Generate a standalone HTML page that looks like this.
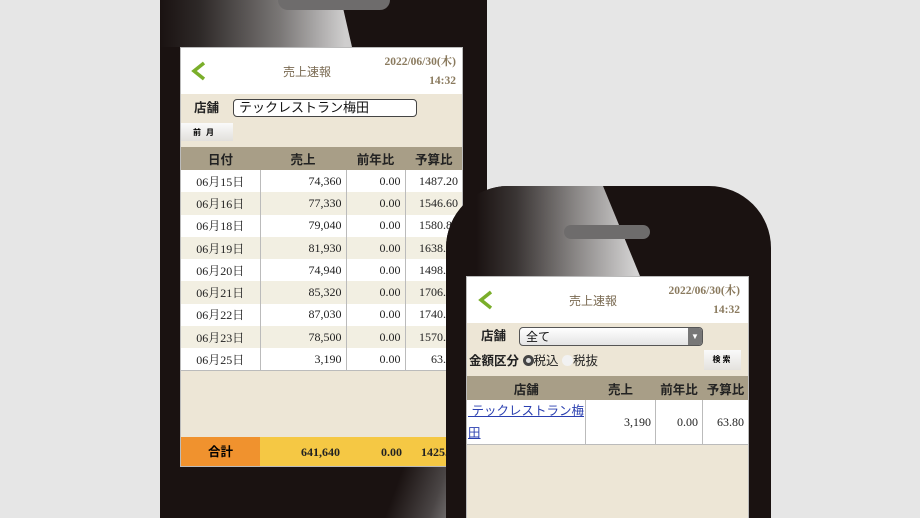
<!DOCTYPE html>
<html style="width:920px;height:518px;overflow:hidden"><head><meta charset="utf-8"><style>
*{margin:0;padding:0;box-sizing:border-box}
body{width:920px;height:518px;overflow:hidden;background:#e6e6e6;position:relative;font-family:"Liberation Serif","Noto Serif CJK SC",serif}
.ph{position:absolute;background:#1a1211;overflow:hidden}
.gl{position:absolute}
.scr{position:absolute;background:#ede6d6;overflow:hidden}
.hd{position:absolute;left:0;right:0;top:0;background:#fff}
.sans{font-family:"Liberation Sans","Noto Sans CJK JP",sans-serif}
.ab{position:absolute}
table{border-collapse:collapse;position:absolute;left:0}
td{font-size:12px;color:#222;border-right:1px solid #bbb;padding:0 4px;text-align:right}
th{font-family:"Liberation Sans","Noto Sans CJK JP",sans-serif;font-size:12.5px;color:#222;background:#a89e87;font-weight:bold;text-align:center}
.bk{font-weight:bold;font-size:12px;color:#222}
</style></head><body>

<!-- phone 1 -->
<div class="ph" style="left:160px;top:-40px;width:327px;height:558px;border-radius:40px 40px 0 0">
  <div class="gl" style="left:0;top:0;width:327px;height:87px;background:linear-gradient(90deg,#1a1211 0px,#2e2928 40px,#7a7776 120px,#cfcece 185px);clip-path:polygon(0 0,172px 0,192px 87px,0 87px)"></div>
  <div class="gl" style="left:118px;top:30px;width:112px;height:20px;border-radius:10px;background:#6e6c6c"></div>
  <div class="gl" style="left:200px;top:505px;width:127px;height:53px;background:linear-gradient(110deg,#1a1211 30%,#4a4545 60%,#bdbcbc 100%)"></div>
</div>
<div class="scr" style="left:180px;top:47px;width:283px;height:420px;border:1px solid #bbb">
  <div class="hd" style="height:46px">
    <svg class="ab" style="left:8px;top:12px" width="18" height="22"><path d="M15 3 L5 11 L15 19" stroke="#7aae2a" stroke-width="3.5" fill="none"/></svg>
    <div class="ab sans" style="left:102px;top:15px;font-size:12px;color:#7a6a52">売上速報</div>
    <div class="ab bk" style="right:6px;top:5px;color:#8a7a5e;font-size:11.5px">2022/06/30(木)</div>
    <div class="ab bk" style="right:6px;top:27px;color:#8a7a5e;font-size:11.5px">14:32</div>
  </div>
  <div class="ab sans" style="left:13px;top:49px;font-size:12.5px;font-weight:bold;color:#222">店舗</div>
  <div class="ab sans" style="left:52px;top:51px;width:184px;height:18px;border:1px solid #444;border-radius:4px;background:#fff;font-size:13px;padding-left:5px;line-height:16px;color:#111">テックレストラン梅田</div>
  <div class="ab sans" style="left:0;top:75px;width:52px;height:18px;background:linear-gradient(#fafafa,#e2e0dc);font-size:8px;font-weight:bold;padding:4px 0 0 12px;letter-spacing:5px">前月</div>
  <table style="top:99px;width:282px">
    <tr style="height:23px"><th style="width:79px">日付</th><th style="width:86px">売上</th><th style="width:59px">前年比</th><th>予算比</th></tr>
    <tr style="height:22.3px;background:#fff"><td style="text-align:center">06月15日</td><td>74,360</td><td>0.00</td><td>1487.20</td></tr>
    <tr style="height:22.3px;background:#f2efe2"><td style="text-align:center">06月16日</td><td>77,330</td><td>0.00</td><td>1546.60</td></tr>
    <tr style="height:22.3px;background:#fff"><td style="text-align:center">06月18日</td><td>79,040</td><td>0.00</td><td>1580.80</td></tr>
    <tr style="height:22.3px;background:#f2efe2"><td style="text-align:center">06月19日</td><td>81,930</td><td>0.00</td><td>1638.60</td></tr>
    <tr style="height:22.3px;background:#fff"><td style="text-align:center">06月20日</td><td>74,940</td><td>0.00</td><td>1498.80</td></tr>
    <tr style="height:22.3px;background:#f2efe2"><td style="text-align:center">06月21日</td><td>85,320</td><td>0.00</td><td>1706.40</td></tr>
    <tr style="height:22.3px;background:#fff"><td style="text-align:center">06月22日</td><td>87,030</td><td>0.00</td><td>1740.60</td></tr>
    <tr style="height:22.3px;background:#f2efe2"><td style="text-align:center">06月23日</td><td>78,500</td><td>0.00</td><td>1570.00</td></tr>
    <tr style="height:22.3px;background:#fff;border-bottom:1px solid #bbb"><td style="text-align:center">06月25日</td><td>3,190</td><td>0.00</td><td>63.80</td></tr>
  </table>
  <div class="ab" style="left:0;top:389px;width:79px;height:30px;background:#f0922e;font-family:'Liberation Sans','Noto Sans CJK JP',sans-serif;font-weight:bold;font-size:12.5px;text-align:center;line-height:30px">合計</div>
  <div class="ab bk" style="left:79px;top:389px;width:204px;height:30px;background:#f5c844;line-height:30px">
    <span class="ab" style="right:124px">641,640</span><span class="ab" style="right:62px">0.00</span><span class="ab" style="left:161px">1425.60</span>
  </div>
</div>

<!-- phone 2 -->
<div class="ph" style="left:446px;top:186px;width:325px;height:332px;border-radius:62px 62px 0 0">
  <div class="gl" style="left:0;top:0;width:325px;height:90px;background:linear-gradient(90deg,#1a1211 30px,#3a3534 70px,#8a8786 130px,#d4d3d3 190px);clip-path:polygon(0 0,157px 0,194px 90px,0 90px)"></div>
  <div class="gl" style="left:118px;top:39px;width:86px;height:14px;border-radius:7px;background:#6e6c6c"></div>
</div>
<div class="scr" style="left:466px;top:276px;width:283px;height:242px;border:1px solid #bbb;border-bottom:none">
  <div class="hd" style="height:46px">
    <svg class="ab" style="left:9px;top:12px" width="18" height="22"><path d="M15 3 L5 11 L15 19" stroke="#7aae2a" stroke-width="3.5" fill="none"/></svg>
    <div class="ab sans" style="left:102px;top:15px;font-size:12px;color:#7a6a52">売上速報</div>
    <div class="ab bk" style="right:8px;top:5px;color:#8a7a5e;font-size:11.5px">2022/06/30(木)</div>
    <div class="ab bk" style="right:8px;top:27px;color:#8a7a5e;font-size:11.5px">14:32</div>
  </div>
  <div class="ab sans" style="left:14px;top:48px;font-size:12.5px;font-weight:bold;color:#222">店舗</div>
  <div class="ab sans" style="left:52px;top:50px;width:184px;height:19px;border:1px solid #555;border-radius:4px;background:linear-gradient(#fff,#e4e4e4);font-size:12px;padding-left:6px;line-height:18px;color:#111">全て
    <div class="ab" style="right:0;top:0;width:14px;height:17px;background:#777;border-radius:0 3px 3px 0;color:#fff;font-size:8px;text-align:center;line-height:17px">▼</div></div>
  <div class="ab sans" style="left:2px;top:73px;font-size:12.5px;color:#222"><b>金額区分</b> <span style="display:inline-block;width:11px;height:11px;border-radius:50%;border:3px solid #444;background:#ddd;vertical-align:-1px"></span>税込 <span style="display:inline-block;width:11px;height:11px;border-radius:50%;background:#f2f2f2;vertical-align:-1px"></span>税抜</div>
  <div class="ab sans" style="left:237px;top:73px;width:37px;height:20px;background:linear-gradient(#fafafa,#e4e2de);font-size:8px;font-weight:bold;text-align:center;line-height:20px;letter-spacing:2px">検索</div>
  <table style="top:99px;width:282px">
    <tr style="height:24px"><th style="width:117px">店舗</th><th style="width:70px">売上</th><th style="width:47px">前年比</th><th>予算比</th></tr>
    <tr style="height:43px;background:#fff;border-bottom:1px solid #bbb"><td style="text-align:left;padding:0 1px;line-height:22px;white-space:nowrap;font-family:'Liberation Sans','Noto Sans CJK JP',sans-serif;color:#2a3fb0;text-decoration:underline;font-size:12.5px">&nbsp;テックレストラン梅<br>田</td><td>3,190</td><td>0.00</td><td>63.80</td></tr>
  </table>
</div>
</body></html>
